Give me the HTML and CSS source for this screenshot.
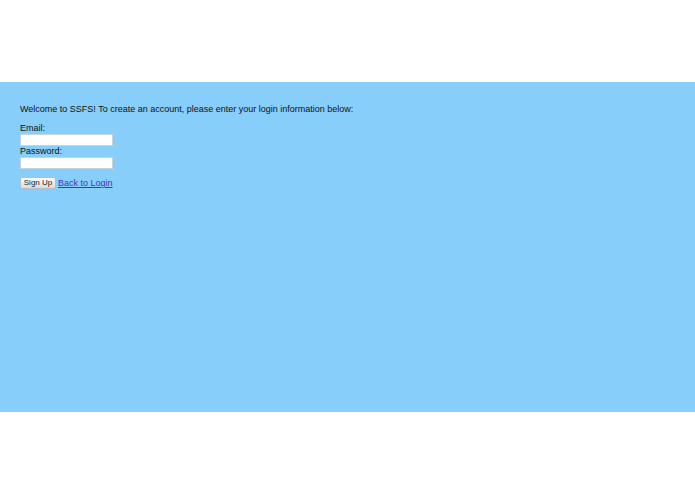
FILE: index.html
```html
<!DOCTYPE html>
<html>
<head>
<meta charset="utf-8">
<link rel="stylesheet" href="styles.css">
</head>
<body>
<div class="top"></div>
<main class="panel">
  <p class="intro">Welcome to SSFS! To create an account, please enter your login information below:</p>
  <form class="form">
    <label class="label">Email:</label>
    <input class="field" type="text">
    <label class="label">Password:</label>
    <input class="field" type="password">
    <div class="actions">
      <button class="btn" type="button">Sign Up</button>
      <a class="link" href="#">Back to Login</a>
    </div>
  </form>
</main>
</body>
</html>
```
FILE: styles.css
```css
html, body { margin: 0; padding: 0; background: #fff; }
body { font-family: "Liberation Sans", Arial, sans-serif; font-size: 9px; color: #111; }
.top { height: 82px; }
.panel { background: #87cefa; height: 330px; box-sizing: border-box; padding: 22px 20px; }
.intro { margin: 0 0 8px; line-height: 11px; }
.form { display: flex; flex-direction: column; align-items: flex-start; }
.label { line-height: 11px; }
.field { width: 93px; height: 12px; box-sizing: border-box; border: 1px solid #c8d4dc; padding: 0; margin: 0; background: #fff; }
.actions { margin-top: 8px; display: flex; align-items: center; gap: 2px; }
.btn { font-family: inherit; font-size: 8px; width: 36px; height: 12px; padding: 0; margin: 0; line-height: 10px; border: 1px solid #b5bcc2; border-radius: 2px; background: linear-gradient(#fbfbfb, #dcdcdc); color: #222; }
.link { color: #4433bb; text-decoration: underline; line-height: 12px; }
```
